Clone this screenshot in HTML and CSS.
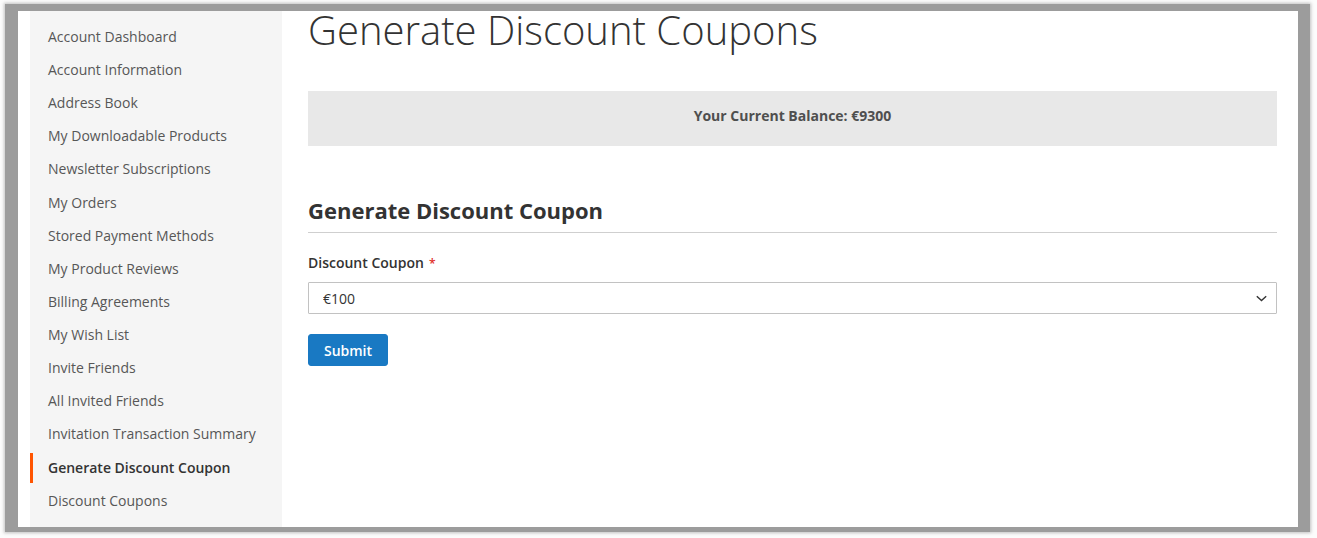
FILE: index.html
```html
<!DOCTYPE html>
<html lang="en">
<head>
<meta charset="utf-8">
<title>Generate Discount Coupons</title>
<link rel="stylesheet" href="styles.css">
</head>
<body>
<div class="frame">
  <div class="page">
    <nav class="sidebar">
      <ul class="nav">
        <li class="nav-item">Account Dashboard</li>
        <li class="nav-item">Account Information</li>
        <li class="nav-item">Address Book</li>
        <li class="nav-item">My Downloadable Products</li>
        <li class="nav-item">Newsletter Subscriptions</li>
        <li class="nav-item">My Orders</li>
        <li class="nav-item">Stored Payment Methods</li>
        <li class="nav-item">My Product Reviews</li>
        <li class="nav-item">Billing Agreements</li>
        <li class="nav-item">My Wish List</li>
        <li class="nav-item">Invite Friends</li>
        <li class="nav-item">All Invited Friends</li>
        <li class="nav-item">Invitation Transaction Summary</li>
        <li class="nav-item active">Generate Discount Coupon</li>
        <li class="nav-item">Discount Coupons</li>
      </ul>
    </nav>
    <main class="main">
      <h1 class="page-title">Generate Discount Coupons</h1>
      <div class="balance">Your Current Balance: €9300</div>
      <h2 class="block-title">Generate Discount Coupon</h2>
      <label class="field-label" for="coupon">Discount Coupon<span class="req">*</span></label>
      <div class="select-wrap">
        <select id="coupon" class="select">
          <option>€100</option>
        </select>
        <svg class="chev" width="11" height="7" viewBox="0 0 11 7"><path d="M0.8 1.2 L5.5 5.6 L10.2 1.2" fill="none" stroke="#333" stroke-width="1.4"/></svg>
      </div>
      <button class="btn" type="button">Submit</button>
    </main>
  </div>
</div>
</body>
</html>
```
FILE: styles.css
```css
* { box-sizing: border-box; }
html, body { margin: 0; padding: 0; }
body {
  background: #fcfcfc;
  font-family: "Open Sans", "Noto Sans", sans-serif;
  color: #333;
  width: 1317px;
  height: 538px;
  overflow: hidden;
}
.frame {
  margin: 4px 0 0 5px;
  width: 1305px;
  height: 528px;
  border-style: solid;
  border-color: #9c9c9c;
  border-width: 7px 12px 5px 13px;
  box-shadow: 0 0 3px 1px rgba(120,120,120,0.45);
  background: #fff;
}
.page {
  display: flex;
  height: 100%;
  padding-left: 12px;
}
.sidebar {
  width: 252px;
  flex: none;
  background: #f5f5f5;
  height: 100%;
}
.nav {
  list-style: none;
  margin: 0;
  padding: 9.4px 0 0;
}
.nav-item {
  font-size: 14px;
  line-height: 20px;
  padding: 6.57px 0 6.57px 18px;
  color: #575757;
  white-space: nowrap;
}
.nav-item.active {
  border-left: 3px solid #ff5501;
  padding: 5px 0 5px 15px;
  margin: 1.57px 0;
  color: #333;
  font-weight: 600;
}
.main {
  flex: 1;
  min-width: 0;
  padding: 0 21px 0 26px;
}
.page-title {
  margin: 0;
  font-size: 40px;
  line-height: 37px;
  font-weight: 300;
  color: #333;
  white-space: nowrap;
}
.balance {
  margin-top: 43px;
  height: 55px;
  padding-bottom: 6px;
  background: #e8e8e8;
  display: flex;
  align-items: center;
  justify-content: center;
  font-size: 14px;
  font-weight: 700;
  color: #4f4f4f;
}
.block-title {
  margin: 52px 0 0;
  font-size: 22px;
  line-height: 24px;
  font-weight: 700;
  color: #333;
  padding-bottom: 10px;
  border-bottom: 1px solid #cfcfcf;
}
.field-label {
  display: block;
  margin-top: 20px;
  font-size: 14px;
  line-height: 20px;
  font-weight: 600;
  color: #333;
}
.req {
  color: #e02b27;
  font-size: 12px;
  margin-left: 5px;
}
.select-wrap {
  position: relative;
  margin-top: 8px;
}
.select {
  -webkit-appearance: none;
  appearance: none;
  display: block;
  width: 100%;
  height: 32px;
  border: 1px solid #c2c2c2;
  border-radius: 1px;
  background: #fff;
  font-family: "Open Sans", "Noto Sans", sans-serif;
  font-size: 14px;
  color: #333;
  padding: 0 30px 0 14px;
  outline: none;
}
.chev {
  position: absolute;
  right: 10px;
  top: 13px;
  pointer-events: none;
}
.btn {
  margin-top: 20px;
  width: 80px;
  height: 32px;
  border: 1px solid #1979c3;
  border-radius: 3px;
  background: #1979c3;
  color: #fff;
  font-family: "Open Sans", "Noto Sans", sans-serif;
  font-size: 14px;
  font-weight: 600;
  padding: 0;
  cursor: pointer;
}
```
